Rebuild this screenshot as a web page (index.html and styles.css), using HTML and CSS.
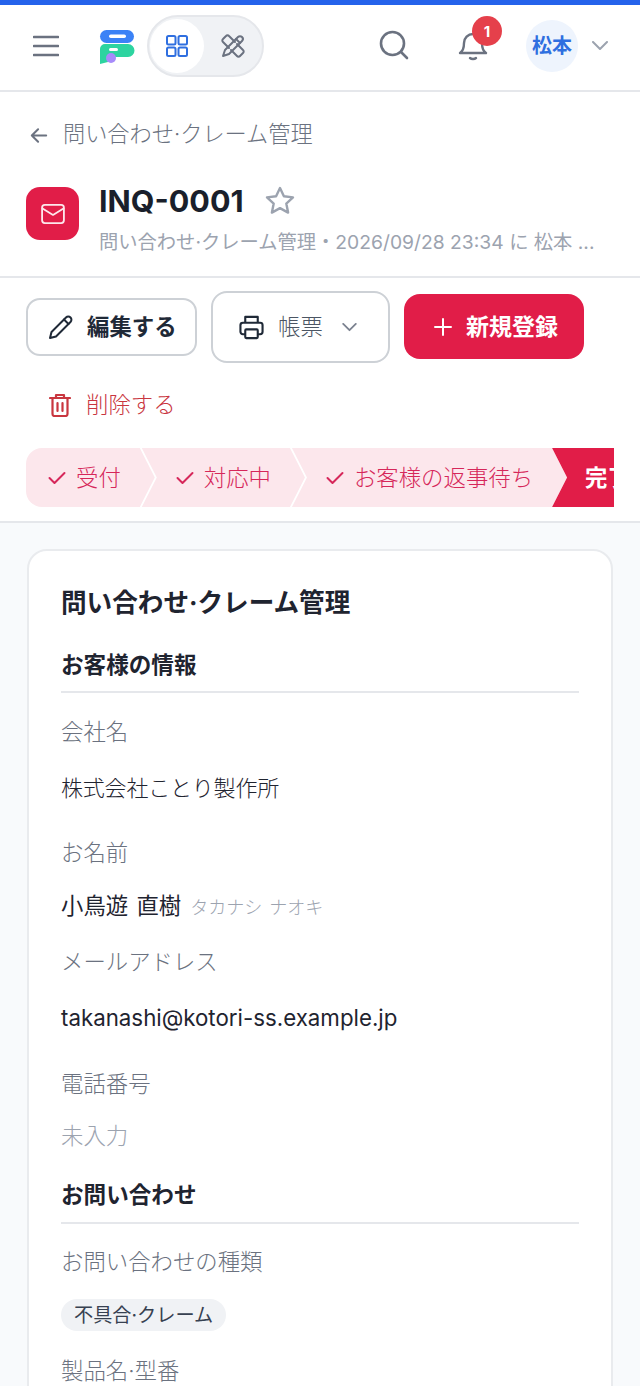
FILE: index.html
```html
<!DOCTYPE html>
<html lang="ja">
<head>
<meta charset="utf-8">
<title>INQ-0001</title>
<link rel="stylesheet" href="styles.css">
</head>
<body>
<header class="topbar">
  <div class="topbar-left">
    <svg class="icon-menu" viewBox="0 0 26 22" width="26" height="22" fill="none" stroke="#6b7280" stroke-width="2.6" stroke-linecap="round"><path d="M1 2h24M1 11h24M1 20h24"/></svg>
    <svg class="logo" viewBox="0 0 36 36" width="36" height="36">
      <rect x="1" y="0" width="34" height="13" rx="6.5" fill="#3b82f6"/>
      <rect x="10" y="4.5" width="17" height="3.5" rx="1.75" fill="#fff"/>
      <path d="M1 19a5 5 0 0 1 5-5h23a4 4 0 0 1 0 13H15v2a6 6 0 0 1-6 3l-8 2z" fill="#2dd4a0"/>
      <rect x="10" y="18" width="9" height="3" rx="1.5" fill="#fff"/>
      <circle cx="12" cy="28" r="5" fill="#a78bfa"/>
    </svg>
    <div class="switch">
      <span class="switch-on">
        <svg viewBox="0 0 24 24" width="24" height="24" fill="none" stroke="#2f6fe0" stroke-width="2"><rect x="2" y="2" width="8.5" height="8.5" rx="1.5"/><rect x="13.5" y="2" width="8.5" height="8.5" rx="1.5"/><rect x="2" y="13.5" width="8.5" height="8.5" rx="1.5"/><rect x="13.5" y="13.5" width="8.5" height="8.5" rx="1.5"/></svg>
      </span>
      <span class="switch-off">
        <svg viewBox="0 0 26 26" width="26" height="26" fill="none" stroke="#6b7280" stroke-width="2" stroke-linejoin="round" stroke-linecap="round"><path d="M9 15 3 9a2 2 0 0 1 0-3l3-3a2 2 0 0 1 3 0l6 6M17 11l6 6a2 2 0 0 1 0 3l-3 3a2 2 0 0 1-3 0l-6-6"/><path d="M5 17 18 4a2.8 2.8 0 0 1 4 4L9 21l-6 2z"/><path d="M16 6l4 4"/></svg>
      </span>
    </div>
  </div>
  <div class="topbar-right">
    <svg class="icon-search" viewBox="0 0 30 30" width="30" height="30" fill="none" stroke="#6b7280" stroke-width="2.6" stroke-linecap="round"><circle cx="13.5" cy="13.5" r="11.5"/><path d="m22 22 6 6"/></svg>
    <div class="bell">
      <svg viewBox="0 0 30 32" width="30" height="32" fill="none" stroke="#6b7280" stroke-width="2.4" stroke-linecap="round" stroke-linejoin="round"><path d="M2 24c3-2 4-5 4-10a9 9 0 0 1 18 0c0 5 1 8 4 10z"/><path d="M12 29c1.500 1.300 4.500 1.300 6 0"/></svg>
      <span class="badge">1</span>
    </div>
    <span class="avatar"><span class="lift">松本</span></span>
    <svg class="chev" viewBox="0 0 16 10" width="16" height="10" fill="none" stroke="#9ca3af" stroke-width="2" stroke-linecap="round" stroke-linejoin="round"><path d="m1 1 7 7 7-7"/></svg>
  </div>
</header>

<section class="page-head">
  <a class="crumb">
    <svg viewBox="0 0 20 18" width="18" height="17" fill="none" stroke="#6b7280" stroke-width="2.200" stroke-linecap="round" stroke-linejoin="round"><path d="M18 9H2M9 2 2 9l7 7"/></svg>
    <span class="lift">問い合わせ·クレーム管理</span>
  </a>
  <div class="title-row">
    <span class="app-icon">
      <svg viewBox="0 0 26 22" width="24" height="20" fill="none" stroke="#fde7ec" stroke-width="2" stroke-linejoin="round" stroke-linecap="round"><rect x="1" y="1" width="24" height="20" rx="3"/><path d="m1.500 5 11.500 7 11.500-7"/></svg>
    </span>
    <div class="title-text">
      <div class="title-line">
        <h1>INQ-0001</h1>
        <svg viewBox="0 0 32 32" width="32" height="32" fill="none" stroke="#9ca3af" stroke-width="2.400" stroke-linejoin="round"><path d="m16 3 3.900 8.300 9.100 1.100-6.700 6.200 1.800 9-8.100-4.500-8.100 4.500 1.800-9L3 12.400l9.100-1.100z"/></svg>
      </div>
      <p class="meta">問い合わせ·クレーム管理・2026/09/28 23:34 に 松本 ...</p>
    </div>
  </div>
</section>

<section class="actions">
  <div class="action-row">
    <button class="btn btn-edit">
      <svg viewBox="0 0 26 26" width="26" height="26" fill="none" stroke="#1f2937" stroke-width="2" stroke-linejoin="round" stroke-linecap="round"><path d="M2 24l1.500-6L18 3.500a3 3 0 0 1 4.500 4.500L8 22.500z"/><path d="M16 5.500l4.500 4.500"/></svg>
      <span class="lift">編集する</span>
    </button>
    <button class="btn btn-print">
      <svg viewBox="0 0 26 26" width="25" height="25" fill="none" stroke="#1f2937" stroke-width="2.200" stroke-linejoin="round"><path d="M6.500 8V2h13v6"/><path d="M6.500 20H4a2.500 2.500 0 0 1-2.500-2.500v-7A2.500 2.500 0 0 1 4 8h18a2.500 2.500 0 0 1 2.500 2.500v7A2.500 2.500 0 0 1 22 20h-2.500"/><rect x="6.500" y="15" width="13" height="9" rx="1"/></svg>
      <span class="lift">帳票</span>
      <svg class="btn-chev" viewBox="0 0 16 10" width="15" height="9" fill="none" stroke="#7b8290" stroke-width="2" stroke-linecap="round" stroke-linejoin="round"><path d="m1 1 7 7 7-7"/></svg>
    </button>
    <button class="btn btn-new">
      <svg viewBox="0 0 18 18" width="18" height="18" fill="none" stroke="#fff" stroke-width="2" stroke-linecap="round"><path d="M9 1v16M1 9h16"/></svg>
      <span class="lift">新規登録</span>
    </button>
  </div>
  <button class="btn-delete">
    <svg viewBox="0 0 22 24" width="22" height="24" fill="none" stroke="#c9363f" stroke-width="2.200" stroke-linejoin="round" stroke-linecap="round"><path d="M1 5h20M7 5V2h8v3M3.500 5v16a2 2 0 0 0 2 2h11a2 2 0 0 0 2-2V5M8.500 10v8M13.500 10v8"/></svg>
    <span class="lift">削除する</span>
  </button>
</section>

<div class="steps-wrap">
  <ol class="steps">
    <li class="step step-first">
      <svg class="check" viewBox="0 0 18 14" width="18" height="14" fill="none" stroke="#d6275a" stroke-width="2" stroke-linecap="round" stroke-linejoin="round"><path d="m1.500 7 5 5 10-10"/></svg><span class="lift">受付</span>
    </li>
    <li class="step">
      <svg class="check" viewBox="0 0 18 14" width="18" height="14" fill="none" stroke="#d6275a" stroke-width="2" stroke-linecap="round" stroke-linejoin="round"><path d="m1.500 7 5 5 10-10"/></svg><span class="lift">対応中</span>
    </li>
    <li class="step">
      <svg class="check" viewBox="0 0 18 14" width="18" height="14" fill="none" stroke="#d6275a" stroke-width="2" stroke-linecap="round" stroke-linejoin="round"><path d="m1.500 7 5 5 10-10"/></svg><span class="lift">お客様の返事待ち</span>
    </li>
    <li class="step step-current"><span class="lift">完了</span></li>
  </ol>
</div>

<main class="content">
  <article class="card">
    <h2>問い合わせ·クレーム管理</h2>
    <h3 class="section-title">お客様の情報</h3>
    <div class="field f-company">
      <div class="label">会社名</div>
      <div class="value">株式会社ことり製作所</div>
    </div>
    <div class="field f-name">
      <div class="label">お名前</div>
      <div class="value">小鳥遊 直樹<span class="kana">タカナシ ナオキ</span></div>
    </div>
    <div class="field f-mail">
      <div class="label">メールアドレス</div>
      <div class="value">takanashi@kotori-ss.example.jp</div>
    </div>
    <div class="field f-tel">
      <div class="label">電話番号</div>
      <div class="value empty">未入力</div>
    </div>
    <h3 class="section-title">お問い合わせ</h3>
    <div class="field f-type">
      <div class="label">お問い合わせの種類</div>
      <div class="value"><span class="tag">不具合·クレーム</span></div>
    </div>
    <div class="field f-product">
      <div class="label">製品名·型番</div>
    </div>
  </article>
</main>
</body>
</html>
```

FILE: styles.css
```css
* { box-sizing: border-box; }
html, body { margin: 0; padding: 0; }
body {
  width: 640px;
  height: 1386px;
  overflow: hidden;
  background: #fff;
  color: #1f2430;
  font-family: Inter, "Noto Sans CJK JP", sans-serif;
  font-size: 22.4px;
}
svg { display: block; flex: none; }
h1, h2, h3, p, ol { margin: 0; padding: 0; }
.lift { display: block; margin-bottom: 4px; }

.topbar {
  height: 92px;
  border-top: 5px solid #2563eb;
  border-bottom: 2px solid #e5e7eb;
  display: flex;
  align-items: center;
  justify-content: space-between;
  padding: 0 32px 3px 33px;
}
.topbar-left, .topbar-right { display: flex; align-items: center; }
.logo { margin-left: 40px; margin-top: 4px; }
.switch {
  margin-left: 12px;
  width: 117px;
  height: 62px;
  border-radius: 31px;
  background: #f0f2f5;
  border: 2px solid #e5e7eb;
  display: flex;
  align-items: center;
}
.switch-on {
  width: 54px;
  height: 54px;
  margin-left: 1px;
  border-radius: 50%;
  background: #fff;
  display: flex;
  align-items: center;
  justify-content: center;
}
.switch-off { margin-left: 16px; }
.icon-search { margin-right: 49px; margin-top: -2px; }
.bell { position: relative; margin-right: 38px; margin-top: -2px; }
.badge {
  position: absolute;
  top: -13px;
  left: 14px;
  width: 30px;
  height: 30px;
  border-radius: 50%;
  background: #e5404b;
  color: #fff;
  font-size: 15px;
  font-weight: 700;
  display: flex;
  align-items: center;
  justify-content: center;
}
.avatar {
  width: 52px;
  height: 52px;
  border-radius: 50%;
  background: #eef4fd;
  color: #2f6fe0;
  font-size: 20px;
  font-weight: 700;
  display: flex;
  align-items: center;
  justify-content: center;
}
.chev { margin-left: 14px; }

.page-head {
  height: 186px;
  border-bottom: 2px solid #e5e7eb;
  padding: 29px 26px 0 30px;
}
.crumb {
  display: flex;
  align-items: center;
  gap: 15px;
  height: 28px;
  color: #6b7280;
  font-size: 22.2px;
  font-weight: 300;
}
.crumb .lift { margin-bottom: 6px; }
.title-row { display: flex; margin-top: 25px; margin-left: -4px; }
.app-icon {
  width: 53px;
  height: 53px;
  margin-top: 13px;
  border-radius: 14px;
  background: #e11d48;
  display: flex;
  align-items: center;
  justify-content: center;
}
.title-text { margin: 8px 0 0 20px; min-width: 0; }
.title-line { display: flex; align-items: center; gap: 20px; height: 38px; }
h1 { font-size: 30.5px; font-weight: 700; color: #1a1f2b; line-height: 38px; }
.meta { margin-top: 9px; font-size: 19.3px; line-height: 26px; color: #9ca3af; white-space: nowrap; }

.actions { padding: 13px 26px 0; }
.action-row { display: flex; align-items: center; gap: 14px; }
.btn {
  font: inherit;
  display: flex;
  align-items: center;
  background: #fff;
  color: #1f2937;
  flex: none;
}
.btn-edit {
  width: 171px;
  height: 58px;
  justify-content: flex-start;
  gap: 13px;
  padding: 0 0 0 20px;
  border: 2px solid #cdd1d6;
  border-radius: 14px;
  font-weight: 700;
}
.btn-print {
  width: 179px;
  height: 72px;
  gap: 14px;
  padding: 0 0 0 26px;
  border: 2px solid #cdd1d6;
  border-radius: 16px;
  color: #4b5563;
  font-weight: 300;
}
.btn-chev { margin-left: 5px; }
.btn-new {
  width: 180px;
  height: 65px;
  gap: 14px;
  padding: 0 0 0 30px;
  margin-top: -1px;
  border: 0;
  border-radius: 16px;
  background: #e11d48;
  color: #fff;
  font-size: 23px;
  font-weight: 700;
}
.btn-delete {
  font: inherit;
  font-weight: 300;
  display: flex;
  align-items: center;
  gap: 15px;
  margin: 26px 0 0 23px;
  padding: 0;
  height: 32px;
  border: 0;
  background: none;
  color: #c9363f;
}

.steps-wrap {
  margin-top: 27px;
  height: 75px;
  padding-left: 26px;
  border-bottom: 2px solid #e5e7eb;
}
.steps {
  list-style: none;
  width: 588px;
  height: 59px;
  display: flex;
  overflow: hidden;
  color: #d6275a;
  font-weight: 300;
}
.step {
  flex: none;
  height: 59px;
  display: flex;
  align-items: center;
  gap: 10px;
  margin-left: -13px;
  padding: 0 34px 0 34px;
  background: #fce7ec;
  clip-path: polygon(0 0, calc(100% - 15px) 0, 100% 50%, calc(100% - 15px) 100%, 0 100%, 15px 50%);
  white-space: nowrap;
}
.step-first {
  margin-left: 0;
  padding-left: 22px;
  border-radius: 16px 0 0 16px;
  clip-path: polygon(0 0, calc(100% - 15px) 0, 100% 50%, calc(100% - 15px) 100%, 0 100%);
}
.step-current {
  margin-left: -15px;
  padding-left: 33px;
  background: #e11d48;
  color: #fff;
  font-weight: 700;
}

.content {
  background: #f8fafc;
  padding: 26px 27px 0;
  height: 900px;
}
.card {
  background: #fff;
  border: 2px solid #e9ebee;
  border-radius: 20px;
  padding: 34px 32px;
  height: 900px;
}
h2 { font-size: 25.6px; font-weight: 700; line-height: 36px; color: #1f2430; }
.section-title {
  margin-top: 28px;
  height: 44px;
  font-size: 22.6px;
  font-weight: 700;
  line-height: 32px;
  border-bottom: 2px solid #e5e7eb;
}
.label { color: #6b7280; line-height: 32px; font-weight: 300; }
.value { color: #1f2430; line-height: 32px; }
.field { margin-top: 22px; }
.f-company { margin-top: 23px; }
.f-company .value { margin-top: 24px; font-size: 22px; letter-spacing: -0.2px; font-weight: 300; }
.f-name { margin-top: 33px; }
.f-name .value { margin-top: 21px; word-spacing: 2px; }
.f-mail { margin-top: 22px; }
.f-mail .value { margin-top: 24px; font-size: 22.3px; }
.f-tel { margin-top: 34px; }
.f-tel .value { margin-top: 20px; }
.f-tel + .section-title { margin-top: 27px; height: 45px; }
.f-type .value { margin-top: 20px; }
.f-product { margin-top: 24px; }
.kana { margin-left: 9px; font-size: 18px; font-weight: 300; color: #9ca3af; }
.empty { color: #9ca3af; font-weight: 300; }
.tag {
  display: inline-block;
  height: 32px;
  padding: 0 13px;
  border-radius: 16px;
  background: #f0f2f5;
  color: #374151;
  font-size: 19.2px;
  line-height: 32px;
}
```
